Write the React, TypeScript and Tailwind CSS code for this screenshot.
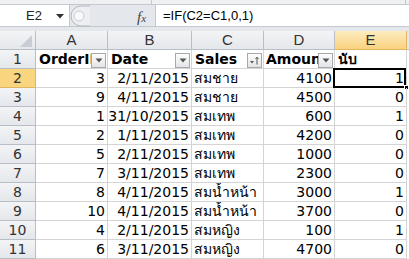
import React from "react";

const rows: [number, string, string, number, number][] = [
  [3, "2/11/2015", "สมชาย", 4100, 1],
  [9, "4/11/2015", "สมชาย", 4500, 0],
  [1, "31/10/2015", "สมเทพ", 600, 1],
  [2, "1/11/2015", "สมเทพ", 4200, 0],
  [5, "2/11/2015", "สมเทพ", 1000, 0],
  [7, "3/11/2015", "สมเทพ", 2300, 0],
  [8, "4/11/2015", "สมน้ำหน้า", 3000, 1],
  [10, "4/11/2015", "สมน้ำหน้า", 3700, 0],
  [4, "2/11/2015", "สมหญิง", 100, 1],
  [6, "3/11/2015", "สมหญิง", 4700, 0],
];

const cell = "h-[19px] border-r border-b border-[#d4d4d4] leading-[18px] whitespace-nowrap overflow-hidden";
const rowHead =
  "h-[19px] border-r border-b border-[#b9bec6] bg-gradient-to-b from-[#f3f4f6] to-[#e4e7eb] text-[#333] text-center leading-[18px] font-['DejaVu_Sans',sans-serif] text-[14px]";

function FilterBtn({ sort }: { sort?: boolean }) {
  return (
    <div className="absolute right-[1px] top-[3px] w-[15px] h-[15px] border border-[#a5a9af] bg-gradient-to-b from-[#fdfdfd] to-[#e3e5e8] flex items-center justify-center">
      {sort ? (
        <svg width="11" height="9" viewBox="0 0 11 9">
          <path d="M1 5h4l-2 2.5z" fill="#555" />
          <path d="M8 8.5V1.5M6.5 3L8 1.2 9.5 3" stroke="#555" strokeWidth="1" fill="none" />
        </svg>
      ) : (
        <svg width="8" height="5" viewBox="0 0 8 5">
          <path d="M0.5 0.5h7L4 4.5z" fill="#555" />
        </svg>
      )}
    </div>
  );
}

export default function App() {
  return (
    <div className="w-[409px] h-[259px] overflow-hidden bg-white font-['DejaVu_Sans',sans-serif] text-[14px] text-black">
      {/* formula bar */}
      <div className="h-[29px] bg-[#e4e7eb] relative">
        <div className="h-[5px] bg-[#eef0f2] border-b border-[#c4c8ce] flex">
          <div className="w-[152px] border-r border-[#c4c8ce]" />
          <div className="w-[254px] border-r border-[#c4c8ce]" />
        </div>
        <div className="h-[22px] flex border-b border-[#c4c8ce]">
          <div className="w-[70px] bg-white border-r border-[#c4c8ce] flex items-center relative">
            <span className="ml-[26px] font-['Liberation_Sans',sans-serif] text-[13px] text-[#222]">E2</span>
            <svg className="absolute left-[56px] top-[9px]" width="8" height="5" viewBox="0 0 8 5">
              <path d="M0 0h8L4 4.5z" fill="#333" />
            </svg>
          </div>
          <div className="w-[85px] flex items-center relative">
            <svg width="20" height="22" viewBox="0 0 20 22" className="shrink-0">
              <path d="M20 1H11A10 10 0 0 0 11 21H20" fill="#eceef1" stroke="#b3b8bf" />
              <circle cx="9" cy="11" r="5" fill="#f7f8f9" stroke="#c9cdd2" />
            </svg>
            <span className="absolute left-[67px] top-[1px] font-['Liberation_Serif',serif] italic text-[15px] text-[#444]">
              f<span className="text-[11px]">x</span>
            </span>
          </div>
          <div className="flex-1 bg-white border-l border-[#c4c8ce] flex items-center pl-[7px] font-['Liberation_Sans',sans-serif] text-[13px] text-black">
            =IF(C2=C1,0,1)
          </div>
        </div>
      </div>
      <div className="h-[2px] bg-[#e4e7eb]" />

      {/* grid */}
      <div className="grid grid-cols-[36px_72px_84px_72px_71px_72px_2px]">
        {/* column headers */}
        <div className="h-[19px] border-r border-b border-[#b9bec6] bg-gradient-to-b from-[#f3f4f6] to-[#e4e7eb] relative">
          <svg className="absolute right-[3px] bottom-[2px]" width="12" height="12" viewBox="0 0 12 12">
            <path d="M12 0V12H0z" fill="#c9cdd3" />
          </svg>
        </div>
        {["A", "B", "C", "D"].map((c) => (
          <div
            key={c}
            className="h-[19px] border-r border-b border-[#b9bec6] bg-gradient-to-b from-[#f3f4f6] to-[#e4e7eb] text-center leading-[18px] font-['Liberation_Sans',sans-serif] text-[15px] text-[#333]"
          >
            {c}
          </div>
        ))}
        <div className="h-[19px] border-r border-b border-[#e2b560] bg-gradient-to-b from-[#fdecc0] to-[#f8d27d] text-center leading-[18px] font-['Liberation_Sans',sans-serif] text-[15px] text-[#333]">
          E
        </div>
        <div className="h-[19px] bg-[#e4e7eb] border-b border-[#b9bec6]" />

        {/* row 1 */}
        <div className={rowHead}>1</div>
        <div className={`${cell} relative font-bold pl-[3px]`}>
          OrderID
          <FilterBtn />
        </div>
        <div className={`${cell} relative font-bold pl-[3px]`}>
          Date
          <FilterBtn />
        </div>
        <div className={`${cell} relative font-bold pl-[3px]`}>
          Sales
          <FilterBtn sort />
        </div>
        <div className={`${cell} relative font-bold pl-[2px]`}>
          Amount
          <FilterBtn />
        </div>
        <div className={`${cell} font-bold pl-[3px]`}>นับ</div>
        <div className="h-[19px]" />

        {rows.map((r, i) => {
          const sel = i === 0;
          return (
            <React.Fragment key={i}>
              <div
                className={
                  sel
                    ? "h-[19px] border-r border-b border-[#e2b560] bg-[#f8d57e] text-[#333] text-center leading-[18px] text-[14px]"
                    : rowHead
                }
              >
                {i + 2}
              </div>
              <div className={`${cell} text-right pr-[2px]`}>{r[0]}</div>
              <div className={`${cell} text-right pr-[2px]`}>{r[1]}</div>
              <div className={`${cell} pl-[2px]`}>{r[2]}</div>
              <div className={`${cell} text-right pr-[2px]`}>{r[3]}</div>
              <div className={`${cell} text-right pr-[2px] relative overflow-visible`}>
                {r[4]}
                {sel && (
                  <>
                    <div className="absolute left-[-2px] top-[-1px] w-[73px] h-[20px] border-2 border-black pointer-events-none" />
                    <div className="absolute right-[-3px] bottom-[-3px] w-[5px] h-[5px] bg-black border border-white" />
                  </>
                )}
              </div>
              <div className="h-[19px]" />
            </React.Fragment>
          );
        })}
      </div>
    </div>
  );
}
